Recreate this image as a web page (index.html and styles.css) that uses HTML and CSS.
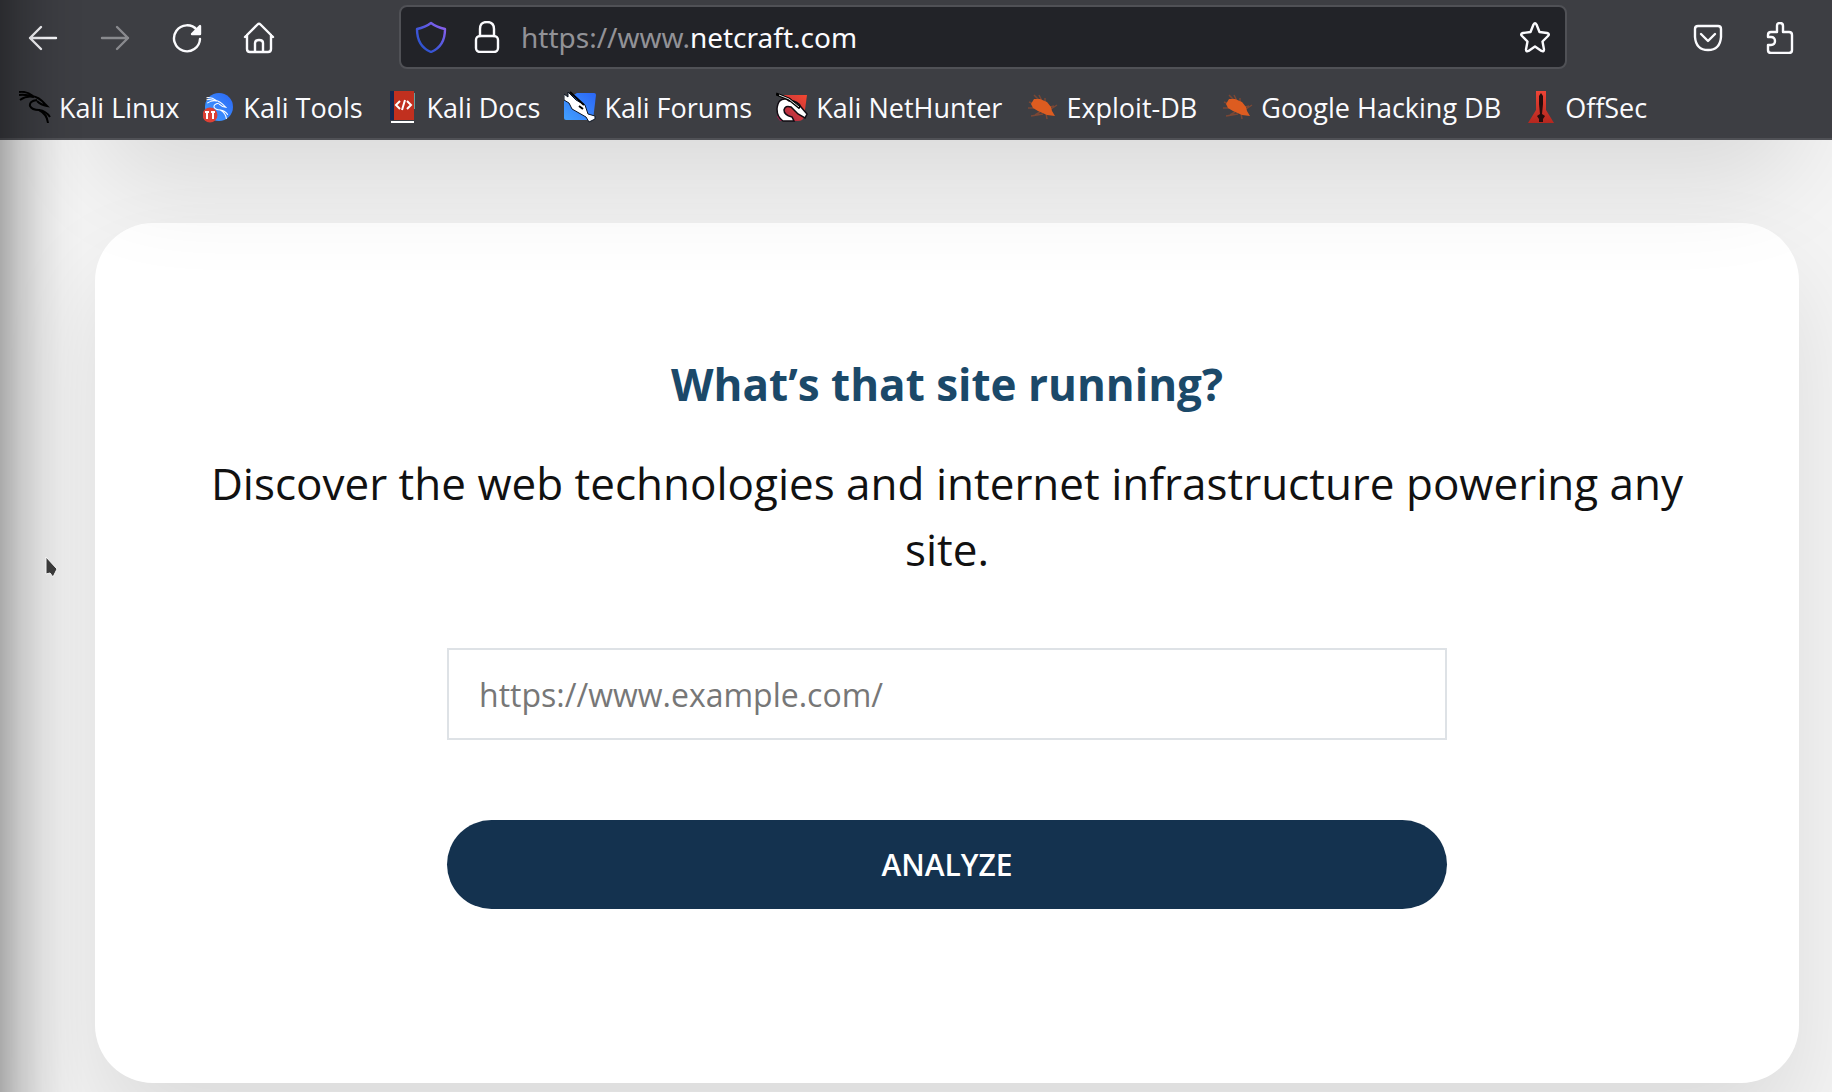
FILE: index.html
```html
<!DOCTYPE html>
<html lang="en">
<head>
<meta charset="utf-8">
<title>What’s that site running?</title>
<link rel="stylesheet" href="styles.css">
</head>
<body>
<svg class="defs" aria-hidden="true">
  <defs>
    <linearGradient id="shield" x1="1" y1="0" x2="0" y2="1"><stop offset="0" stop-color="#9562f0"/><stop offset=".55" stop-color="#4657dc"/><stop offset="1" stop-color="#2050c8"/></linearGradient>
    <linearGradient id="blue" x1="1" y1="0" x2="0" y2="1"><stop offset="0" stop-color="#2b66f6"/><stop offset="1" stop-color="#42a0ff"/></linearGradient>
    <linearGradient id="red" x1="1" y1="0" x2="0" y2="1"><stop offset="0" stop-color="#f4472f"/><stop offset=".6" stop-color="#c3353f"/><stop offset="1" stop-color="#8e204b"/></linearGradient>
    <linearGradient id="tower" x1="0" y1="0" x2="0" y2="1"><stop offset="0" stop-color="#ee4436"/><stop offset="1" stop-color="#b5271f"/></linearGradient>
    <symbol id="dragon" viewBox="0 0 32 32">
      <path d="M0 1Q8 0 14 5M0 4Q7 3 14 6M1 9Q8 4 15 6"/>
      <path d="M13 5Q20 6 26 13L28 15Q22 14 18 10"/>
      <path d="M18 9Q10 10 11 15Q13 19 20 19Q27 20 31 26M20 19Q28 23 29 32"/>
    </symbol>
    <symbol id="roach" viewBox="0 0 32 32">
      <path d="M8 4L13 9M3 11L8 13M2 17L8 17M9 24L14 21M5 25L17 23M21 28L20 22M28 15L24 16M31 14L25 18M19 7L19 12M13 4L16 10" fill="none" stroke="#8a4a32" stroke-width="1.500" opacity=".8"/>
      <path d="M5 13L8 8L14 8L21 11L25 16L26 20L29 25L21 24L12 20L7 17Z" fill="#dd5c20"/>
    </symbol>
  </defs>
</svg>

<header class="browser">
  <div class="toolbar">
    <nav class="controls" aria-label="Navigation">
      <button class="tool" type="button" aria-label="Back"><svg viewBox="0 0 32 32"><path d="M29 16H3M14 5L3 16L14 27"/></svg></button>
      <button class="tool" type="button" aria-label="Forward" disabled><svg viewBox="0 0 32 32"><path d="M3 16H29M18 5L29 16L18 27"/></svg></button>
      <button class="tool" type="button" aria-label="Reload"><svg viewBox="0 0 32 32"><path d="M26 8A13 13 0 1 0 29 17"/><path class="solid" d="M29 4V12H21Z"/></svg></button>
      <button class="tool" type="button" aria-label="Home"><svg viewBox="0 0 32 32"><path d="M2 15L14.500 2.500Q16 1 17.500 2.500L30 15M4 13V27Q4 30 7 30H25Q28 30 28 27V13M12 30V21Q12 18 16 18Q20 18 20 21V30"/></svg></button>
    </nav>
    <div class="address">
      <button class="chip shield" type="button" aria-label="Tracking protection"><svg viewBox="0 0 32 32"><path d="M16 2C20 5 25 7 30 8C30 19 26 27 16 31C6 27 2 19 2 8C7 7 12 5 16 2Z" stroke="url(#shield)"/></svg></button>
      <button class="chip" type="button" aria-label="Connection secure"><svg viewBox="0 0 32 32"><rect x="5" y="15" width="22" height="16" rx="4"/><path d="M9 15V8Q9 1 16 1Q23 1 23 8V15"/></svg></button>
      <span class="url">https://www.<b class="domain">netcraft.com</b></span>
      <button class="chip" type="button" aria-label="Bookmark this page"><svg viewBox="0 0 32 32"><path d="M14.500 3.500Q16 1 17.500 3.500L20.500 11L28 12Q31 13 29 15L23.500 20.500L25 28.500Q25 31 22.500 30L16 25.500L9.500 30Q7 31 7 28.500L8.500 20.500L3 15Q1 13 4 12L11.500 11Z"/></svg></button>
    </div>
    <div class="extras">
      <button class="tool" type="button" aria-label="Save to Pocket"><svg viewBox="0 0 32 32"><path d="M6 4H26Q29 4 29 7V15Q28 28 16 28Q4 28 3 15V7Q3 4 6 4ZM9 12L16 19L23 12"/></svg></button>
      <button class="tool" type="button" aria-label="Extensions"><svg viewBox="0 0 32 32"><path d="M7 10H13V4Q13 1 16 1Q19 1 19 4V10H25Q28 10 28 13V28Q28 31 25 31H7Q4 31 4 28V23H7Q11 23 11 19Q11 15 7 15H4V13Q4 10 7 10Z"/></svg></button>
    </div>
  </div>
  <nav class="bookmarks" aria-label="Bookmarks">
    <a class="bookmark" href="#"><svg viewBox="0 0 32 32" class="mark"><use href="#dragon" stroke="#000" stroke-width="2" fill="none"/></svg>Kali Linux</a>
    <a class="bookmark" href="#"><svg viewBox="0 0 32 32" class="mark"><circle cx="16" cy="16" r="14" fill="url(#blue)"/><use href="#dragon" x="1" y="6" width="27" height="22" stroke="#fff" stroke-width="1.500" fill="none"/><circle cx="7" cy="24" r="7.500" fill="#dc4034"/><path d="M2 21H6M4 21V28M8 21H12M10 21V28" stroke="#fff" stroke-width="2"/></svg>Kali Tools</a>
    <a class="bookmark" href="#"><svg viewBox="0 0 32 32" class="mark"><path d="M3 0H8V29H3Z" fill="#162750"/><path d="M27 2H28V18H27Z" fill="#65a2a0"/><path d="M7 0H27V29H7Z" fill="#c1301f"/><path d="M4 30H27V32H4Z" fill="#fff"/><path d="M13 10L9 14L13 18M20 10L24 14L20 18M18 9L15 19" fill="none" stroke="#fff" stroke-width="2"/></svg>Kali Docs</a>
    <a class="bookmark" href="#"><svg viewBox="0 0 32 32" class="mark"><path d="M13 2H30Q32 2 32 4L29 29H2Q0 29 0 27V10Z" fill="url(#blue)"/><path d="M0 3L4 6L4 1L12 9L21 14L24 23L31 25L31 28L25 31L22 26L8 18L5 12L0 9Z" fill="#fff" stroke="#0b1524"/><path d="M6 1L20 14M15 15L19 18" stroke="#000" stroke-width="2"/></svg>Kali Forums</a>
    <a class="bookmark" href="#"><svg viewBox="0 0 32 32" class="mark"><path d="M8 4H31L28 26Q27 30 22 30H4L1 26Z" fill="url(#red)"/><path d="M7 30Q1 26 1 18Q2 7 10 8L13 10Q21 9 25 16L31 23L29 27L22 23L15 16Q9 14 8 19Q8 24 16 26L18 30Z" fill="#fff" stroke="#100b12" stroke-width="1.500"/><path d="M0 3L13 8L24 17" fill="none" stroke="#000" stroke-width="3"/><path d="M3 4L13 8L23 16" fill="none" stroke="#ddd"/></svg>Kali NetHunter</a>
    <a class="bookmark" href="#"><svg class="mark"><use href="#roach"/></svg>Exploit-DB</a>
    <a class="bookmark" href="#"><svg class="mark"><use href="#roach"/></svg>Google Hacking DB</a>
    <a class="bookmark" href="#"><svg viewBox="0 0 32 32" class="mark"><path d="M11 0H21V19L29 32H3L11 19Z" fill="url(#tower)"/><path d="M16 2L18 5V13L17 23L20 25L18 28V31H14V28L12 25L15 23L14 13V5Z" fill="#250d0d"/></svg>OffSec</a>
  </nav>
</header>

<main class="page">
  <section class="card">
    <h1 class="title">What’s that site running?</h1>
    <p class="lead">Discover the web technologies and internet infrastructure powering any site.</p>
    <form class="form">
      <input class="field" type="text" aria-label="Site address" placeholder="https://www.example.com/">
      <button class="submit" type="button">ANALYZE</button>
    </form>
  </section>
</main>
<div class="edge-shade"></div>
<svg class="pointer" viewBox="0 0 14 24" aria-hidden="true"><path d="M2 1V18L6 17L9 21L11 17L13 13Z"/></svg>
</body>
</html>
```
FILE: styles.css
```css
* { box-sizing: border-box; }

body {
  margin: 0;
  min-height: 100vh;
  display: flex;
  flex-direction: column;
  background: #f4f4f4;
  font-family: "Open Sans", sans-serif;
}

button { border: 0; padding: 0; background: none; color: inherit; font: inherit; }
.defs { position: absolute; width: 0; height: 0; }

/* Browser chrome */
.browser {
  position: relative;
  z-index: 3;
  background: #3d3e43;
  border-bottom: 2px solid #505156;
  color: #fbfbfe;
}

.toolbar {
  display: flex;
  align-items: center;
  height: 76px;
  padding: 0 36px 2px 27px;
}

.controls, .extras { display: flex; gap: 40px; padding-top: 2px; }
.tool, .chip { display: flex; flex: none; }
.tool svg, .chip svg {
  width: 32px;
  height: 32px;
  fill: none;
  stroke: currentColor;
  stroke-width: 2.4;
  stroke-linecap: round;
  stroke-linejoin: round;
}
.tool:disabled { opacity: .4; }
.tool .solid { fill: currentColor; }

.address {
  display: flex;
  flex: 1;
  align-items: center;
  gap: 18px;
  height: 64px;
  margin: 0 125px 0 124px;
  padding: 0 14px;
  border: 2px solid #505156;
  border-radius: 8px;
  background: #222328;
}
.shield { margin-right: 6px; }
.url {
  flex: 1;
  color: #929297;
  font-family: "Noto Sans", sans-serif;
  font-size: 28px;
}
.domain { color: #fbfbfe; font-weight: 400; }

.bookmarks {
  display: flex;
  align-items: center;
  gap: 24px;
  height: 62px;
  padding-left: 19px;
}
.bookmark {
  display: flex;
  align-items: center;
  gap: 8px;
  color: inherit;
  font-size: 27px;
  text-decoration: none;
  white-space: nowrap;
}
.mark { width: 32px; height: 32px; }

/* Page */
.page {
  position: relative;
  flex: 1;
  overflow: hidden;
  padding: 83px 33px 9px 95px;
}

/* Shadow cast by the panel scrolled off above */
.page::before {
  content: "";
  position: absolute;
  z-index: 2;
  right: 33px;
  bottom: 100%;
  left: 95px;
  height: 800px;
  border-radius: 58px;
  box-shadow: 0 44px 100px rgba(0, 0, 0, .1);
  pointer-events: none;
}

.card {
  min-height: 860px;
  padding: 128px 100px;
  border-radius: 58px;
  background: #fff;
  box-shadow: 0 50px 100px rgba(0, 0, 0, .1);
  text-align: center;
}
.title { margin: 0 0 33px; color: #1b4969; font-size: 44px; line-height: 66px; }
.lead { margin: 0 0 66px; color: #111; font-size: 44px; line-height: 66px; }

.form {
  display: flex;
  flex-direction: column;
  gap: 80px;
  max-width: 1000px;
  margin: 0 auto;
}
.field {
  height: 92px;
  padding: 0 30px;
  border: 2px solid #dee2e6;
  background: #fff;
  color: #111;
  font: inherit;
  font-size: 32px;
}
.field::placeholder { color: #777; opacity: 1; }
.submit {
  height: 89px;
  border-radius: 45px;
  background: #14324f;
  color: #fff;
  font-size: 30px;
  font-weight: 600;
}

.edge-shade {
  position: fixed;
  z-index: 4;
  inset: 0 auto 0 0;
  width: 84px;
  background: linear-gradient(90deg, rgba(0, 0, 0, .3), rgba(0, 0, 0, .18) 23%, rgba(0, 0, 0, .07) 52%, rgba(0, 0, 0, .02) 75%, transparent);
  pointer-events: none;
}
.pointer {
  position: fixed;
  z-index: 5;
  top: 556px;
  left: 44px;
  width: 14px;
  height: 24px;
  fill: #3a3a3a;
  stroke: #f4f4f4;
  pointer-events: none;
}
```
